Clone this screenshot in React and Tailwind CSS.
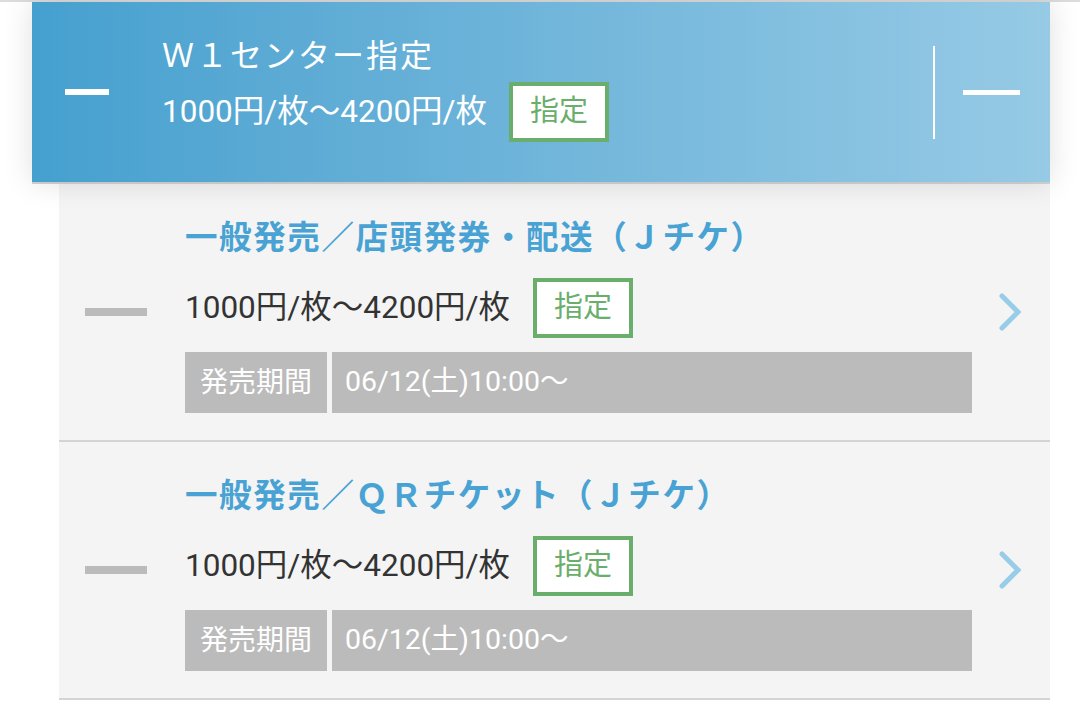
import React from "react";

const FONT = "font-['Roboto','Noto_Sans_CJK_JP',sans-serif]";

const ROWS = [
  { title: "一般発売／店頭発券・配送（Ｊチケ）", price: "1000円/枚～4200円/枚", period: "06/12(土)10:00～" },
  { title: "一般発売／ＱＲチケット（Ｊチケ）", price: "1000円/枚～4200円/枚", period: "06/12(土)10:00～" },
];

function Badge({ className = "" }) {
  return (
    <span
      className={`inline-flex h-[60px] w-[100px] items-center justify-center border-[4px] border-[#6aae6c] bg-white text-[29px] text-[#6aae6c] ${className}`}
    >
      指定
    </span>
  );
}

function Chevron() {
  return (
    <svg width="26" height="40" viewBox="0 0 26 40" aria-hidden="true">
      <polyline
        points="4,4 20,20 4,36"
        fill="none"
        stroke="#97cde8"
        strokeWidth="5"
        strokeLinecap="round"
        strokeLinejoin="miter"
      />
    </svg>
  );
}

function SaleRow({ row }) {
  return (
    <div className="flex items-center border-b-2 border-[#d4d4d4]">
      <span className="ml-[26px] h-[8px] w-[62px] shrink-0 bg-[#bbbbbb]" />
      <div className="ml-[38px] flex w-[787px] flex-col pb-[27px] pt-[34px]">
        <p className="h-[40px] whitespace-nowrap text-[32.5px] font-bold leading-[40px] tracking-[1.6px] text-[#48a2d3]">
          {row.title}
        </p>
        <div className="mt-[20px] flex h-[60px] items-center">
          <span className="text-[31.5px] text-[#333333]">{row.price}</span>
          <Badge className="ml-[23px]" />
        </div>
        <div className="mt-[14px] flex h-[61px]">
          <span className="flex w-[142px] items-center justify-center bg-[#bbbbbb] text-[28px] text-white">
            発売期間
          </span>
          <span className="ml-[5px] flex flex-1 items-center bg-[#bbbbbb] pl-[13px] text-[28.5px] text-white">
            {row.period}
          </span>
        </div>
      </div>
      <div className="ml-[26px] flex items-center">
        <Chevron />
      </div>
    </div>
  );
}

export default function App() {
  return (
    <div className={`relative h-[705px] w-[1080px] overflow-hidden bg-white ${FONT}`}>
      <div className="h-[2px] w-full bg-[#dcdcdc]" />
      <div className="ml-[32px] w-[1018px]">
        <header className="relative flex h-[180px] items-center bg-gradient-to-r from-[#45a0cf] to-[#96cae5] shadow-[0_0_28px_rgba(0,0,0,0.13)]">
          <span className="ml-[33px] h-[6px] w-[44px] shrink-0 bg-white" />
          <div className="ml-[53px] flex flex-col pb-[6px]">
            <p className="h-[40px] whitespace-nowrap text-[32px] leading-[40px] tracking-[2px] text-white">
              Ｗ１センター指定
            </p>
            <div className="mt-[6px] flex h-[60px] items-center">
              <span className="text-[31.5px] text-white">1000円/枚～4200円/枚</span>
              <Badge className="ml-[22px] w-[98px]" />
            </div>
          </div>
          <span className="ml-auto h-[93px] w-[2px] bg-white" />
          <span className="ml-[28px] mr-[30px] h-[5px] w-[57px] bg-white" />
        </header>
        <div className="h-[2px] bg-[#d4d4d4]" />
        <div className="ml-[27px] w-[991px] bg-[#f4f4f4]">
          {ROWS.map((row) => (
            <SaleRow key={row.title} row={row} />
          ))}
        </div>
      </div>
    </div>
  );
}
